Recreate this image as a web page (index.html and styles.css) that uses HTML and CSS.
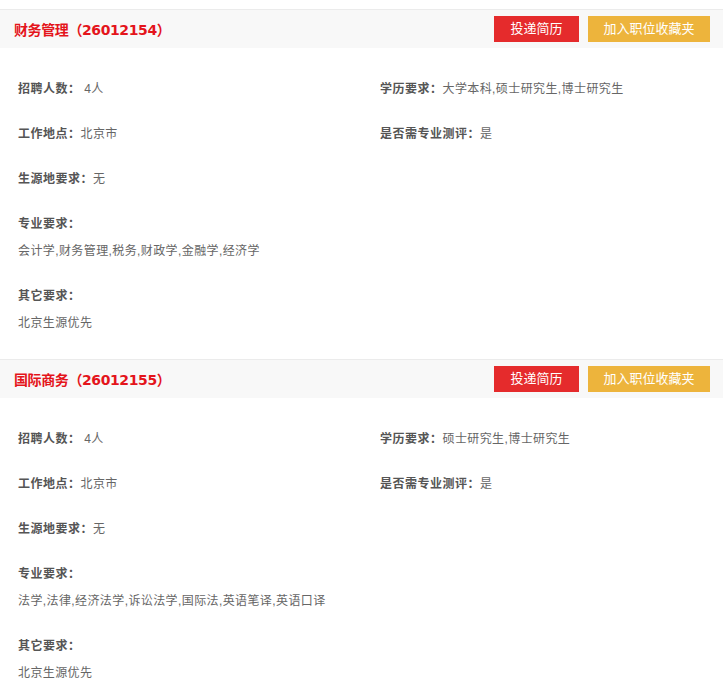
FILE: index.html
```html
<!DOCTYPE html>
<html lang="zh-CN">
<head>
    <meta charset="UTF-8">
    <meta name="viewport" content="width=device-width, initial-scale=1.0">
    <title>职位列表</title>
    <link rel="stylesheet" href="styles.css">
</head>
<body>

<div class="job-list">
    <div class="job">
        <div class="job-head">
            <h3>财务管理（26012154）</h3>
            <div class="btns">
                <a href="#" class="btn btn-send">投递简历</a>
                <a href="#" class="btn btn-fav">加入职位收藏夹</a>
            </div>
        </div>
        <div class="job-body">
            <ul class="info">
                <li><b>招聘人数：</b> 4人</li>
                <li><b>学历要求：</b>大学本科,硕士研究生,博士研究生</li>
                <li><b>工作地点：</b>北京市</li>
                <li><b>是否需专业测评：</b>是</li>
                <li><b>生源地要求：</b>无</li>
            </ul>
            <dl class="req">
                <dt>专业要求：</dt>
                <dd>会计学,财务管理,税务,财政学,金融学,经济学</dd>
                <dt>其它要求：</dt>
                <dd>北京生源优先</dd>
            </dl>
        </div>
    </div>

    <div class="job">
        <div class="job-head">
            <h3>国际商务（26012155）</h3>
            <div class="btns">
                <a href="#" class="btn btn-send">投递简历</a>
                <a href="#" class="btn btn-fav">加入职位收藏夹</a>
            </div>
        </div>
        <div class="job-body">
            <ul class="info">
                <li><b>招聘人数：</b> 4人</li>
                <li><b>学历要求：</b>硕士研究生,博士研究生</li>
                <li><b>工作地点：</b>北京市</li>
                <li><b>是否需专业测评：</b>是</li>
                <li><b>生源地要求：</b>无</li>
            </ul>
            <dl class="req">
                <dt>专业要求：</dt>
                <dd>法学,法律,经济法学,诉讼法学,国际法,英语笔译,英语口译</dd>
                <dt>其它要求：</dt>
                <dd>北京生源优先</dd>
            </dl>
        </div>
    </div>
</div>

</body>
</html>
```

FILE: styles.css
```css
body {
    margin: 0;
    padding-top: 9px;
    background: #fff;
    font-family: "Liberation Sans", "Noto Sans CJK SC", sans-serif;
    font-size: 12px;
    letter-spacing: 0.4px;
    color: #666;
}

.job {
    border-top: 1px solid #ebebeb;
}

.job-head {
    display: flex;
    justify-content: space-between;
    align-items: center;
    height: 38px;
    padding: 0 13px 0 14px;
    background: #f8f8f8;
}

.job-head h3 {
    margin: 0;
    font-family: "DejaVu Sans", "Noto Sans CJK SC", sans-serif;
    font-size: 14px;
    font-weight: bold;
    letter-spacing: -0.4px;
    color: #e4141b;
}

.btns {
    display: flex;
    gap: 9px;
}

.btn {
    display: block;
    height: 26px;
    line-height: 26px;
    text-align: center;
    color: #fff;
    font-size: 13px;
    letter-spacing: 0;
    text-decoration: none;
}

.btn-send {
    width: 85px;
    background: #e52b2c;
}

.btn-fav {
    width: 122px;
    background: #edb43c;
}

.job-body {
    padding: 10px 0 22px 18px;
}

.info {
    display: grid;
    grid-template-columns: 362px 1fr;
    row-gap: 18px;
    margin: 18px 0 0;
    padding: 0;
    list-style: none;
    line-height: 27px;
}

.info b,
.req dt {
    font-weight: bold;
    letter-spacing: 0.5px;
    color: #555;
}

.req {
    margin: 0;
    line-height: 27px;
}

.req dt {
    margin-top: 18px;
}

.req dd {
    margin: 0;
}
```
